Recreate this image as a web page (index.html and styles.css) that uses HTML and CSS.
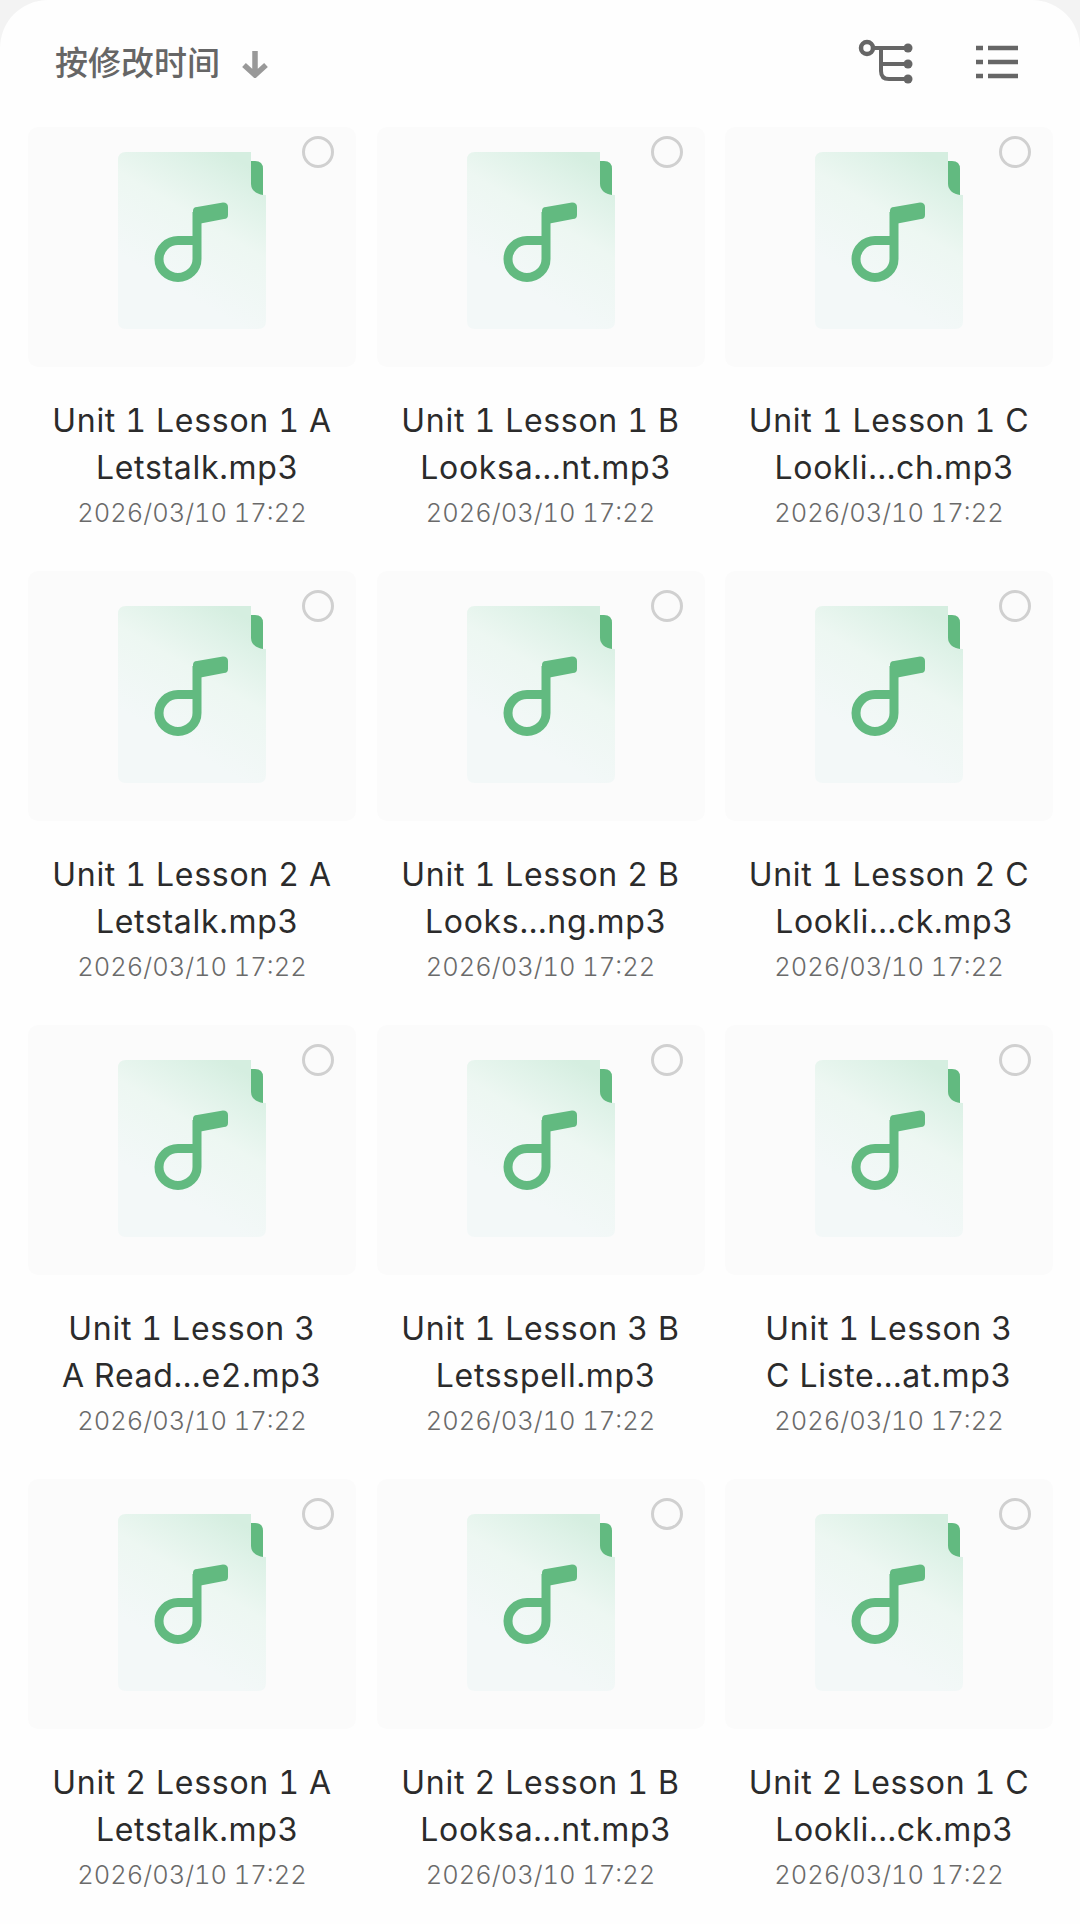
FILE: index.html
```html
<!DOCTYPE html>
<html lang="zh">
<head>
<meta charset="utf-8">
<title>按修改时间</title>
<link rel="stylesheet" href="styles.css">
</head>
<body>
<svg class="defs" width="0" height="0" aria-hidden="true">
  <defs>
    <linearGradient id="docfill" x1="0.72" y1="0" x2="0.35" y2="0.75">
      <stop offset="0" stop-color="#d5eee0"/>
      <stop offset="0.2" stop-color="#dff2e8"/>
      <stop offset="0.5" stop-color="#edf7f2"/>
      <stop offset="1" stop-color="#f3f8f8"/>
    </linearGradient>
    <symbol id="doc" viewBox="0 0 148 177">
      <path d="M8 0H133V30Q133 43 148 43V169Q148 177 140 177H8Q0 177 0 169V8Q0 0 8 0Z" fill="url(#docfill)"/>
      <path d="M133 9H137Q145 9 145 17V43C138 42 133 38 133 32Z" fill="#62ba80"/>
      <path d="M79 60V107A19 18.500 0 1 1 60 88.500H79" fill="none" stroke="#62ba80" stroke-width="9"/>
      <path d="M75 59Q75 55 79 55L105 50.500Q110 50.500 110 55V63Q110 67 106 67L80 72H75Z" fill="#62ba80"/>
    </symbol>
  </defs>
</svg>
<main class="sheet">
  <header class="toolbar">
    <div class="sort">
      <span class="sort-label">按修改时间</span>
      <svg class="sort-arrow" width="26" height="28" viewBox="0 0 26 28"><path d="M13 1V25M2 15L13 25L24 15" fill="none" stroke="#999" stroke-width="5.500"/></svg>
    </div>
    <div class="tools">
      <svg width="60" height="46" viewBox="0 0 60 46">
        <circle cx="9" cy="9" r="6" fill="none" stroke="#666" stroke-width="4.500"/>
        <path d="M15 9H50M23 9V32Q23 40 31 40H50M23 25H50" fill="none" stroke="#666" stroke-width="4"/>
        <circle cx="50" cy="9" r="4.500" fill="#666"/>
        <circle cx="50" cy="25" r="4.500" fill="#666"/>
        <circle cx="50" cy="40" r="4.500" fill="#666"/>
      </svg>
      <svg width="42" height="34" viewBox="0 0 42 34">
        <path d="M0 3H7M12 3H42M0 17H7M12 17H42M0 31H7M12 31H42" fill="none" stroke="#666" stroke-width="4.500"/>
      </svg>
    </div>
  </header>
  <section class="grid">
    <article class="card"><div class="thumb"><svg class="doc"><use href="#doc"/></svg><span class="radio"></span></div><p class="name"><span>Unit 1 Lesson 1 A</span><span class="shift">Letstalk.mp3</span></p><p class="date">2026/03/10 17:22</p></article>
    <article class="card"><div class="thumb"><svg class="doc"><use href="#doc"/></svg><span class="radio"></span></div><p class="name"><span>Unit 1 Lesson 1 B</span><span class="shift">Looksa...nt.mp3</span></p><p class="date">2026/03/10 17:22</p></article>
    <article class="card"><div class="thumb"><svg class="doc"><use href="#doc"/></svg><span class="radio"></span></div><p class="name"><span>Unit 1 Lesson 1 C</span><span class="shift">Lookli...ch.mp3</span></p><p class="date">2026/03/10 17:22</p></article>
    <article class="card"><div class="thumb"><svg class="doc"><use href="#doc"/></svg><span class="radio"></span></div><p class="name"><span>Unit 1 Lesson 2 A</span><span class="shift">Letstalk.mp3</span></p><p class="date">2026/03/10 17:22</p></article>
    <article class="card"><div class="thumb"><svg class="doc"><use href="#doc"/></svg><span class="radio"></span></div><p class="name"><span>Unit 1 Lesson 2 B</span><span class="shift">Looks...ng.mp3</span></p><p class="date">2026/03/10 17:22</p></article>
    <article class="card"><div class="thumb"><svg class="doc"><use href="#doc"/></svg><span class="radio"></span></div><p class="name"><span>Unit 1 Lesson 2 C</span><span class="shift">Lookli...ck.mp3</span></p><p class="date">2026/03/10 17:22</p></article>
    <article class="card"><div class="thumb"><svg class="doc"><use href="#doc"/></svg><span class="radio"></span></div><p class="name"><span>Unit 1 Lesson 3</span><span>A Read...e2.mp3</span></p><p class="date">2026/03/10 17:22</p></article>
    <article class="card"><div class="thumb"><svg class="doc"><use href="#doc"/></svg><span class="radio"></span></div><p class="name"><span>Unit 1 Lesson 3 B</span><span class="shift">Letsspell.mp3</span></p><p class="date">2026/03/10 17:22</p></article>
    <article class="card"><div class="thumb"><svg class="doc"><use href="#doc"/></svg><span class="radio"></span></div><p class="name"><span>Unit 1 Lesson 3</span><span>C Liste...at.mp3</span></p><p class="date">2026/03/10 17:22</p></article>
    <article class="card"><div class="thumb"><svg class="doc"><use href="#doc"/></svg><span class="radio"></span></div><p class="name"><span>Unit 2 Lesson 1 A</span><span class="shift">Letstalk.mp3</span></p><p class="date">2026/03/10 17:22</p></article>
    <article class="card"><div class="thumb"><svg class="doc"><use href="#doc"/></svg><span class="radio"></span></div><p class="name"><span>Unit 2 Lesson 1 B</span><span class="shift">Looksa...nt.mp3</span></p><p class="date">2026/03/10 17:22</p></article>
    <article class="card"><div class="thumb"><svg class="doc"><use href="#doc"/></svg><span class="radio"></span></div><p class="name"><span>Unit 2 Lesson 1 C</span><span class="shift">Lookli...ck.mp3</span></p><p class="date">2026/03/10 17:22</p></article>
  </section>
</main>
</body>
</html>
```
FILE: styles.css
```css
* { box-sizing: border-box; }
html, body { margin: 0; height: 1924px; overflow: hidden; background: #f3f3f3; }
body { font-family: Inter, "Noto Sans CJK SC", sans-serif; }
.defs { display: block; height: 0; }
.sheet { height: 1924px; background: #fefefe; border-radius: 48px 48px 0 0; overflow: hidden; }
.toolbar { height: 127px; padding: 0 62px 4px 55px; display: flex; align-items: center; justify-content: space-between; }
.sort { display: flex; align-items: center; gap: 22px; }
.sort-label { font-family: "Noto Sans CJK SC", sans-serif; font-size: 33px; font-weight: 500; color: #666; line-height: 40px; margin-top: -2px; }
.sort-arrow { display: block; margin-top: 4px; }
.tools { display: flex; align-items: center; gap: 58px; }
.tools svg { display: block; }
.grid { padding: 0 26px 0 28px; display: grid; grid-template-columns: repeat(3, 328px); column-gap: 20.5px; grid-auto-rows: 454px; }
.card { margin: 0; }
.thumb { position: relative; height: 240px; padding-top: 25px; background: #fbfbfb; border-radius: 10px; display: flex; justify-content: center; align-items: flex-start; }
.card:nth-child(n+4) .thumb { height: 250px; margin-top: -10px; padding-top: 35px; }
.card:nth-child(n+4) .radio { top: 19px; }
.doc { display: block; width: 148px; height: 177px; }
.radio { position: absolute; top: 9px; right: 22px; width: 32px; height: 32px; border: 3px solid #d0d0d0; border-radius: 50%; }
.name { margin: 30px 0 0; font-size: 32px; letter-spacing: 0.7px; font-feature-settings: "tnum"; line-height: 47px; color: #2b2b2b; text-align: center; white-space: nowrap; }
.name span { display: block; }
.name .shift { padding-left: 11px; }
.date { margin: 0; font-size: 25.5px; font-weight: 300; font-feature-settings: "tnum"; line-height: 44px; color: #6a6a6a; text-align: center; white-space: nowrap; }
```
